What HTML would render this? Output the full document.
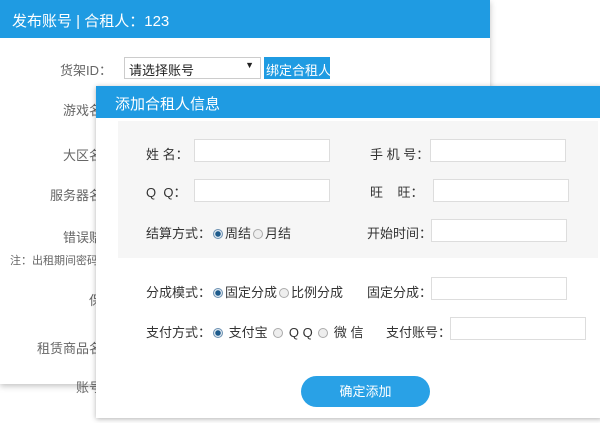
<!DOCTYPE html>
<html><head><meta charset="utf-8"><style>
*{margin:0;padding:0;box-sizing:border-box}
body{width:600px;height:423px;background:#fff;position:relative;overflow:hidden;font-family:"Liberation Sans","Noto Sans CJK SC",sans-serif;font-size:13px;color:#333}
.a{position:absolute;white-space:nowrap}
.back{position:absolute;left:0;top:0;width:490px;height:384px;background:#fff;box-shadow:0 2px 6px rgba(0,0,0,.25)}
.hd{position:absolute;left:0;top:0;width:490px;height:38px;background:#1f9be2;color:#fff;font-size:15px;padding:10px 0 0 12px}
.lbl{color:#666;text-align:right;width:102px;left:0}
.modal{position:absolute;left:96px;top:86px;width:506px;height:332px;background:#fff;box-shadow:0 1px 5px rgba(0,0,0,.3)}
.mhd{position:absolute;left:96px;top:86px;width:504px;height:32px;background:#1f9be2;color:#fff;font-size:15px;padding:7px 0 0 19px}
.gray{position:absolute;left:118px;top:121px;width:480px;height:137px;background:#f6f6f6}
.in{position:absolute;height:23px;width:136px;background:#fff;border:1px solid #ddd}
.r{display:inline-block;width:10px;height:10px;border-radius:50%;border:1px solid #aaa;background:#eee;vertical-align:-1px;margin:0 2px}
.r.on{background:radial-gradient(circle,#1d5b8c 0 2.5px,#dfe8f0 3px);border-color:#6a8fb0}
</style></head><body>
<div class="back"></div>
<div class="hd">发布账号 | 合租人：123</div>
<div class="a" style="left:60px;top:60px;color:#666">货架ID：</div>
<div class="a" style="left:124px;top:57px;width:137px;height:22px;border:1px solid #ccc;padding:2px 4px;font-size:13px;color:#222">请选择账号<span style="position:absolute;right:6px;top:2px;font-size:9px">▼</span></div>
<div class="a" style="left:264px;top:57px;width:66px;height:22px;background:#1f9be2;color:#fff;padding:3px 0 0 2px">绑定合租人</div>
<div class="a lbl" style="top:100px">游戏名</div>
<div class="a lbl" style="top:145px">大区名</div>
<div class="a lbl" style="top:185px">服务器名</div>
<div class="a lbl" style="top:227px">错误赔</div>
<div class="a" style="left:10px;top:252px;font-size:11px;color:#666">注：出租期间密码</div>
<div class="a lbl" style="top:290px">保</div>
<div class="a lbl" style="top:338px">租赁商品名</div>
<div class="a lbl" style="top:377px">账号</div>
<div class="modal"></div>
<div class="mhd">添加合租人信息</div>
<div class="gray"></div>
<div class="a" style="left:146px;top:144px">姓 名：</div>
<div class="in" style="left:194px;top:139px"></div>
<div class="a" style="left:370px;top:144px">手 机 号：</div>
<div class="in" style="left:430px;top:139px"></div>
<div class="a" style="left:146px;top:182px">Q &nbsp;Q：</div>
<div class="in" style="left:194px;top:179px"></div>
<div class="a" style="left:370px;top:182px">旺 &nbsp; &nbsp;旺：</div>
<div class="in" style="left:433px;top:179px"></div>
<div class="a" style="left:146px;top:223px">结算方式：<span class="r on"></span>周结<span class="r"></span>月结</div>
<div class="a" style="left:367px;top:223px">开始时间：</div>
<div class="in" style="left:431px;top:219px"></div>
<div class="a" style="left:146px;top:282px">分成模式：<span class="r on"></span>固定分成<span class="r"></span>比例分成</div>
<div class="a" style="left:367px;top:282px">固定分成：</div>
<div class="in" style="left:431px;top:277px"></div>
<div class="a" style="left:146px;top:322px">支付方式：<span class="r on"></span> 支付宝 <span class="r"></span> Q Q <span class="r"></span> 微 信</div>
<div class="a" style="left:386px;top:322px">支付账号：</div>
<div class="in" style="left:450px;top:317px"></div>
<div class="a" style="left:301px;top:376px;width:129px;height:31px;border-radius:16px;background:#29a1e6;color:#fff;text-align:center;line-height:31px">确定添加</div>
</body></html>
